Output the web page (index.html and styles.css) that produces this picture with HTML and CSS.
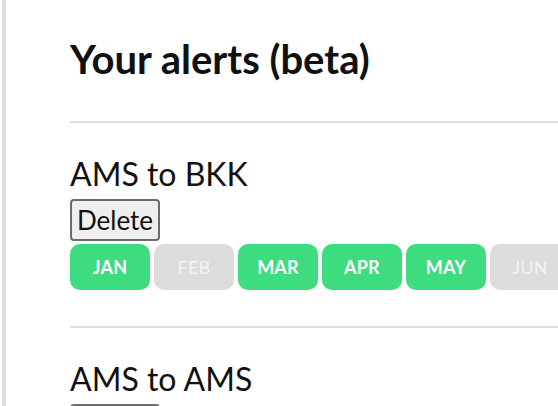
FILE: index.html
```html
<!DOCTYPE html>
<html lang="en">
<head>
<meta charset="utf-8">
<title>Your alerts (beta)</title>
<link rel="stylesheet" href="styles.css">
</head>
<body>
<div class="page">
  <h1 class="title">Your alerts (beta)</h1>
  <hr class="rule">
  <section class="alert">
    <h2 class="route">AMS to BKK</h2>
    <button class="delete" type="button">Delete</button>
    <div class="months">
      <span class="pill on">JAN</span>
      <span class="pill off">FEB</span>
      <span class="pill on">MAR</span>
      <span class="pill on">APR</span>
      <span class="pill on">MAY</span>
      <span class="pill off">JUN</span>
    </div>
  </section>
  <hr class="rule rule-alert">
  <section class="alert">
    <h2 class="route">AMS to AMS</h2>
    <button class="delete" type="button">Delete</button>
  </section>
</div>
</body>
</html>
```

FILE: styles.css
```css
html, body {
  margin: 0;
  padding: 0;
  overflow: hidden;
  background: #ffffff;
}

body {
  font-family: "Lato", "Noto Sans", sans-serif;
  color: #111111;
}

.page {
  margin-left: 2px;
  border-left: 4px solid #dddddd;
  padding: 35px 0 0 64px;
  height: 406px;
  box-sizing: border-box;
  overflow: hidden;
}

.title {
  margin: 0;
  font-size: 40px;
  line-height: 48px;
  font-weight: 700;
  color: #111111;
}

.rule {
  margin: 38px 0 0 0;
  border: 0;
  border-top: 2px solid #dddddd;
  height: 0;
}

.rule-alert {
  margin-top: 36px;
}

.alert {
  display: flex;
  flex-direction: column;
  align-items: flex-start;
}

.route {
  margin: 32px 0 0 0;
  font-size: 32px;
  line-height: 38px;
  font-weight: 400;
  color: #111111;
}

.delete {
  margin-top: 6px;
  height: 42px;
  padding: 0 5px;
  font-family: inherit;
  font-size: 26px;
  color: #111111;
  background: #efefef;
  border: 2px solid #6b6b6b;
  border-radius: 4px;
}

.months {
  margin-top: 3px;
  display: flex;
  gap: 4px;
  flex-wrap: nowrap;
}

.pill {
  flex: 0 0 80px;
  height: 46px;
  border-radius: 10px;
  display: flex;
  align-items: center;
  justify-content: center;
  font-size: 18px;
  font-weight: 700;
  letter-spacing: 0.2px;
}

.pill.on {
  background: #3ddc7f;
  color: #ffffff;
}

.pill.off {
  background: #dcdcdc;
  color: #f4f4f4;
  font-weight: 400;
}
```
